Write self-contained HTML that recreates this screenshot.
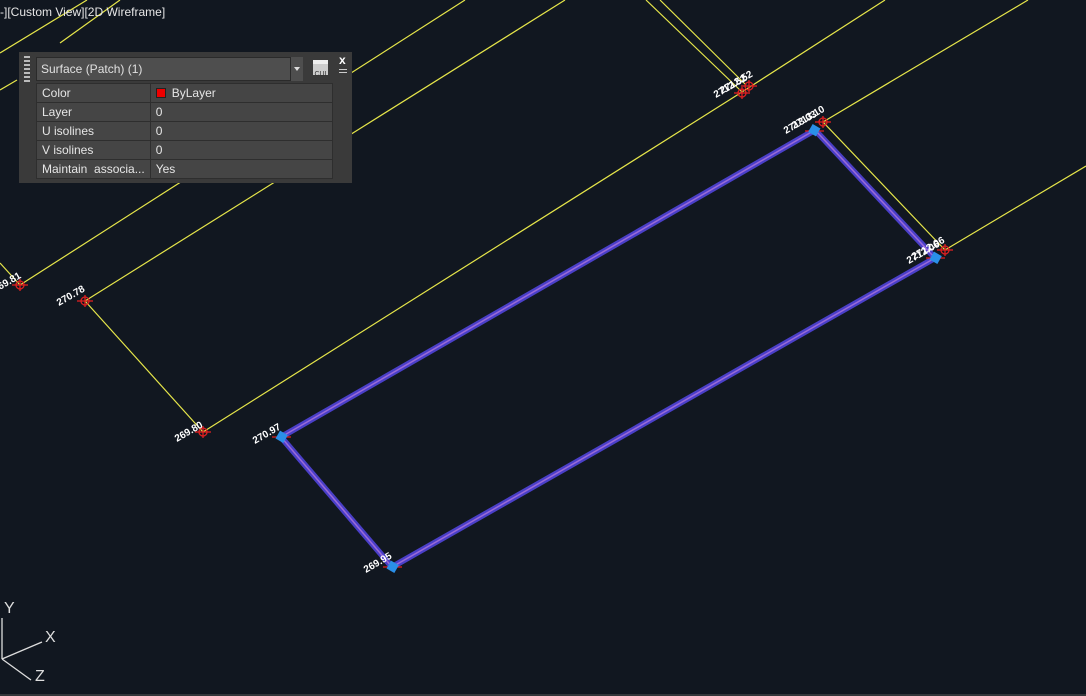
<!DOCTYPE html>
<html><head><style>
body{margin:0;width:1086px;height:696px;background:#111720;overflow:hidden;position:relative;font-family:"Liberation Sans",sans-serif}
.vp{position:absolute;left:0;top:5px;color:#e6e6e6;font-size:12px}
.pn{position:absolute;left:19px;top:52px;width:333px;height:131px;background:#3a3a3a}
.dd{position:absolute;left:17px;top:5px;width:266px;height:24px;background:#4e4e4e;border:1px solid #2a2a2a;box-sizing:border-box;color:#e0e0e0;font-size:12px;line-height:22px;padding-left:4px}
.ar{position:absolute;left:271px;top:5px;width:13px;height:24px;background:#4e4e4e;border-left:1px solid #2a2a2a;box-sizing:border-box}
table{position:absolute;left:17px;top:31px;border-collapse:collapse;width:297px}
td{height:18px;border:1px solid #2e2e2e;background:#454545;color:#e6e6e6;font-size:12px;padding:0 5px;white-space:nowrap}
td:first-child{width:98px}
</style></head><body>
<svg width="1086" height="696" style="position:absolute;left:0;top:0">
<g stroke="#e6e64a" stroke-width="1.2" fill="none">
<line x1="0" y1="53" x2="87" y2="0"/><line x1="60" y1="43" x2="120" y2="0"/>
<line x1="0" y1="90" x2="17" y2="80"/>
<line x1="20" y1="285" x2="465" y2="0"/>
<line x1="85" y1="301" x2="565" y2="0"/>
<line x1="203" y1="432" x2="742" y2="92"/><line x1="742" y1="92" x2="885" y2="0"/>
<line x1="823" y1="122" x2="1028" y2="0"/>
<line x1="945" y1="250" x2="1086" y2="166"/>
<line x1="0" y1="263" x2="20" y2="285"/>
<line x1="85" y1="301" x2="203" y2="432"/>
<line x1="646" y1="0" x2="742" y2="92"/>
<line x1="660" y1="0" x2="746" y2="85"/>
<line x1="823" y1="122" x2="945" y2="250"/>
</g>
<polygon points="281,437 815,130 935,258 392,567" fill="none" stroke="#4a3fc8" stroke-width="6" stroke-linejoin="round"/>
<polygon points="281,437 815,130 935,258 392,567" fill="none" stroke="#9a6ad8" stroke-width="1.5"/>
<g fill="none" stroke="#e02020" stroke-width="1.3">
<g transform="translate(20,285)"><circle r="4"/><line x1="-8" y1="0" x2="8" y2="0"/><line x1="0" y1="-6" x2="0" y2="6"/></g>
<g transform="translate(85,301)"><circle r="4"/><line x1="-8" y1="0" x2="8" y2="0"/><line x1="0" y1="-6" x2="0" y2="6"/></g>
<g transform="translate(203,432)"><circle r="4"/><line x1="-8" y1="0" x2="8" y2="0"/><line x1="0" y1="-6" x2="0" y2="6"/></g>
<g transform="translate(742,93)"><circle r="4"/><line x1="-8" y1="0" x2="8" y2="0"/><line x1="0" y1="-6" x2="0" y2="6"/></g>
<g transform="translate(749,86)"><circle r="4"/><line x1="-8" y1="0" x2="8" y2="0"/><line x1="0" y1="-6" x2="0" y2="6"/></g>
<g transform="translate(823,122)"><circle r="4"/><line x1="-8" y1="0" x2="8" y2="0"/><line x1="0" y1="-6" x2="0" y2="6"/></g>
<g transform="translate(945,250)"><circle r="4"/><line x1="-8" y1="0" x2="8" y2="0"/><line x1="0" y1="-6" x2="0" y2="6"/></g>
<line x1="272" y1="437" x2="291" y2="437"/><line x1="383" y1="567" x2="402" y2="567"/><line x1="805" y1="131" x2="824" y2="131"/><line x1="926" y1="258" x2="945" y2="258"/>
</g>
<g fill="#2a8fe8"><rect x="277" y="432" width="9" height="9" transform="rotate(30 281 437)"/><rect x="388" y="562" width="9" height="9" transform="rotate(30 392 567)"/><rect x="810" y="126" width="9" height="9" transform="rotate(30 815 130)"/><rect x="931" y="253" width="9" height="9" transform="rotate(30 935 258)"/></g>
<g fill="#fff" font-size="10" font-family="Liberation Sans" font-weight="bold">
<text transform="translate(0,290) rotate(-30)">69.81</text>
<text transform="translate(59,306) rotate(-30)">270.78</text>
<text transform="translate(177,442) rotate(-30)">269.80</text>
<text transform="translate(255,444) rotate(-30)">270.97</text>
<text transform="translate(366,573) rotate(-30)">269.95</text>
<text transform="translate(716,98) rotate(-30)">2712.52</text>
<text transform="translate(722,94) rotate(-30)">2712.52</text>
<text transform="translate(786,134) rotate(-30)">2713.03</text>
<text transform="translate(794,129) rotate(-30)">2713.10</text>
<text transform="translate(909,264) rotate(-30)">2712.06</text>
<text transform="translate(914,260) rotate(-30)">2712.06</text>
</g>
<g stroke="#ddd" stroke-width="1.3"><line x1="2" y1="659" x2="2" y2="618"/><line x1="2" y1="659" x2="42" y2="642"/><line x1="2" y1="659" x2="31" y2="680"/></g>
<g fill="#ddd" font-size="16" font-family="Liberation Sans"><text x="4" y="613">Y</text><text x="45" y="642">X</text><text x="35" y="681">Z</text></g>
<line x1="0" y1="695" x2="1086" y2="695" stroke="#555"/>
</svg>
<div class="vp">-][Custom View][2D Wireframe]</div>
<div class="pn">
<div style="position:absolute;left:5px;top:4px;width:6px;height:26px;background:repeating-linear-gradient(#bbb 0 2px,transparent 2px 4px)"></div>
<div class="dd">Surface (Patch) (1)</div>
<div class="ar"><div style="position:absolute;left:3px;top:10px;border:3px solid transparent;border-top:4px solid #ddd"></div></div>
<div style="position:absolute;left:294px;top:8px;width:15px;height:15px;background:#ccc;color:#333;font-size:7px;text-align:center;line-height:22px;border-top:4px solid #eee;box-sizing:border-box">CUI</div>
<div style="position:absolute;left:320px;top:1px;color:#fff;font-size:12px;font-weight:bold">x</div>
<div style="position:absolute;left:320px;top:17px;width:8px;height:6px;background:repeating-linear-gradient(#ccc 0 1px,transparent 1px 3px)"></div>
<table>
<tr><td>Color</td><td><span style="display:inline-block;width:8px;height:8px;background:#e00;border:1px solid #222;margin-right:6px;vertical-align:-1px"></span>ByLayer</td></tr>
<tr><td>Layer</td><td>0</td></tr>
<tr><td>U isolines</td><td>0</td></tr>
<tr><td>V isolines</td><td>0</td></tr>
<tr><td>Maintain&nbsp;&nbsp;associa...</td><td>Yes</td></tr>
</table>
</div>
</body></html>
